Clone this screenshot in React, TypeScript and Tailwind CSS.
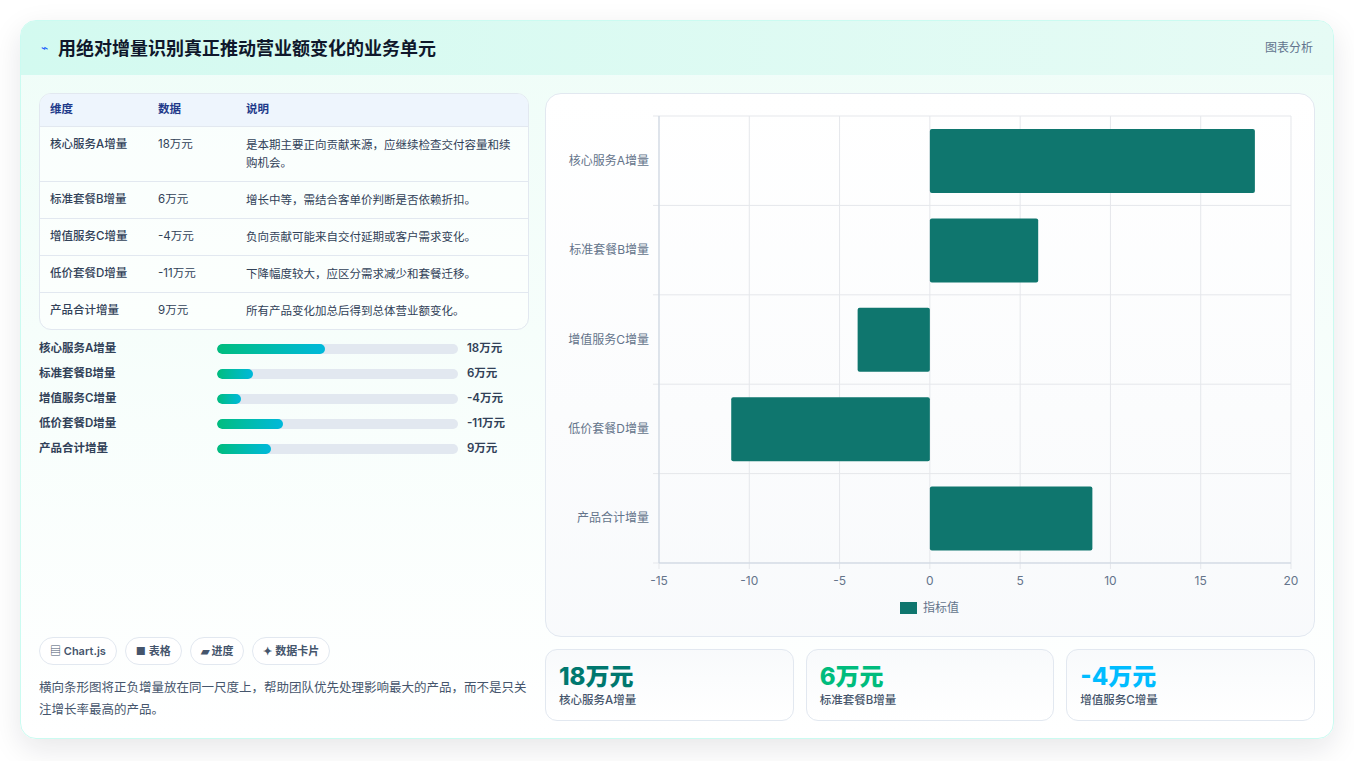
const rows = [
  { name: '核心服务A增量', v: 18, note: '是本期主要正向贡献来源，应继续检查交付容量和续购机会。' },
  { name: '标准套餐B增量', v: 6, note: '增长中等，需结合客单价判断是否依赖折扣。' },
  { name: '增值服务C增量', v: -4, note: '负向贡献可能来自交付延期或客户需求变化。' },
  { name: '低价套餐D增量', v: -11, note: '下降幅度较大，应区分需求减少和套餐迁移。' },
  { name: '产品合计增量', v: 9, note: '所有产品变化加总后得到总体营业额变化。' },
];

function Chart() {
  const L = 113, R = 745, T = 22, B = 469;
  const x = (v: number) => L + ((v + 15) / 35) * (R - L);
  const band = (B - T) / 5;
  const ticks = [-15, -10, -5, 0, 5, 10, 15, 20];
  return (
    <svg width="768" height="543" viewBox="0 0 768 543" className="block">
      {ticks.map(t => (
        <line key={t} x1={x(t)} x2={x(t)} y1={T} y2={B + 6} stroke="#e5e7eb" strokeWidth="1" />
      ))}
      {[0, 1, 2, 3, 4, 5].map(i => (
        <line key={i} x1={L - 6} x2={R} y1={T + i * band} y2={T + i * band} stroke="#e5e7eb" />
      ))}
      <line x1={L} x2={L} y1={T} y2={B} stroke="#cbd5e1" />
      <line x1={L} x2={R} y1={B} y2={B} stroke="#cbd5e1" />
      {rows.map((r, i) => {
        const x0 = x(Math.min(0, r.v));
        const x1 = x(Math.max(0, r.v));
        return (
          <g key={r.name}>
            <rect x={x0} y={T + i * band + 13} width={x1 - x0} height={64} rx="2" fill="#0f766e" />
            <text x={L - 10} y={T + i * band + band / 2 + 4} textAnchor="end" fontSize="12" fill="#64748b">{r.name}</text>
          </g>
        );
      })}
      {ticks.map(t => (
        <text key={t} x={x(t)} y={B + 22} textAnchor="middle" fontSize="12" fill="#64748b">{t}</text>
      ))}
      <rect x="354" y="508" width="17" height="12" fill="#0f766e" />
      <text x="377" y="518" fontSize="12" fill="#64748b">指标值</text>
    </svg>
  );
}

export default function App() {
  return (
    <div className="min-h-screen bg-white p-[20px] pb-0" style={{ fontFamily: 'Inter, "Noto Sans CJK SC", sans-serif' }}>
      <div className="h-[719px] rounded-2xl border border-teal-100 bg-gradient-to-b from-[#effdf8] to-white shadow-[0_10px_30px_rgba(15,23,42,0.1)] overflow-hidden flex flex-col">
        <div className="h-[55px] shrink-0 flex items-center justify-between px-5 bg-gradient-to-r from-[#d3faf0] to-[#e6fbf5] border-b border-teal-50">
          <div className="flex items-center gap-2.5">
            <span className="text-blue-600 text-xs">⌁</span>
            <h1 className="text-[18px] font-bold text-slate-900">用绝对增量识别真正推动营业额变化的业务单元</h1>
          </div>
          <span className="text-xs text-slate-500">图表分析</span>
        </div>
        <div className="flex-1 flex gap-4 px-[18px] pt-[17px] pb-[17px]">
          <div className="w-[491px] flex flex-col">
            <div className="rounded-xl border border-slate-200 overflow-hidden bg-white/60">
              <table className="w-full text-[11.5px] text-slate-700">
                <thead>
                  <tr className="bg-[#eef5fd] text-[#1e3a8a] text-left h-[32px]">
                    <th className="pl-[10px] w-[118px] font-semibold">维度</th>
                    <th className="w-[88px] font-semibold">数据</th>
                    <th className="font-semibold">说明</th>
                  </tr>
                </thead>
                <tbody>
                  {rows.map(r => (
                    <tr key={r.name} className="border-t border-slate-200 align-top">
                      <td className="pl-[10px] py-[9px] font-medium">{r.name}</td>
                      <td className="py-[9px]">{r.v}万元</td>
                      <td className="py-[9px] pr-2 leading-[18px]">{r.note}</td>
                    </tr>
                  ))}
                </tbody>
              </table>
            </div>
            <div className="mt-[10px] flex flex-col gap-[7px]">
              {rows.map(r => (
                <div key={r.name} className="flex items-center h-[18px] text-[11.5px] font-semibold text-slate-700">
                  <span className="w-[178px]">{r.name}</span>
                  <div className="w-[241px] h-[10px] rounded-full bg-slate-200 overflow-hidden">
                    <div className="h-full rounded-full bg-gradient-to-r from-emerald-500 to-cyan-500" style={{ width: `${(Math.abs(r.v) / 40) * 100}%` }} />
                  </div>
                  <span className="ml-[9px]">{r.v}万元</span>
                </div>
              ))}
            </div>
            <div className="mt-auto">
              <div className="flex gap-2 text-[11px] font-semibold text-slate-600">
                {['▤ Chart.js', '■ 表格', '▰ 进度', '✦ 数据卡片'].map(c => (
                  <span key={c} className="px-[10px] h-[28px] flex items-center rounded-full border border-slate-200 bg-white">{c}</span>
                ))}
              </div>
              <p className="mt-[12px] text-[12.5px] leading-[22px] text-slate-600">横向条形图将正负增量放在同一尺度上，帮助团队优先处理影响最大的产品，而不是只关注增长率最高的产品。</p>
            </div>
          </div>
          <div className="flex-1 flex flex-col gap-3">
            <div className="h-[544px] rounded-2xl border border-slate-200 bg-gradient-to-b from-white to-slate-50 overflow-hidden">
              <Chart />
            </div>
            <div className="flex-1 grid grid-cols-3 gap-3">
              {[
                ['18万元', '核心服务A增量', 'text-teal-700'],
                ['6万元', '标准套餐B增量', 'text-emerald-500'],
                ['-4万元', '增值服务C增量', 'text-sky-400'],
              ].map(([v, l, c]) => (
                <div key={l} className="rounded-xl border border-slate-200 bg-gradient-to-b from-slate-50 to-white px-[13px] pt-[12px]">
                  <div className={`text-[24px] font-extrabold leading-[30px] ${c}`}>{v}</div>
                  <div className="text-[11.5px] font-medium text-slate-600">{l}</div>
                </div>
              ))}
            </div>
          </div>
        </div>
      </div>
    </div>
  );
}
